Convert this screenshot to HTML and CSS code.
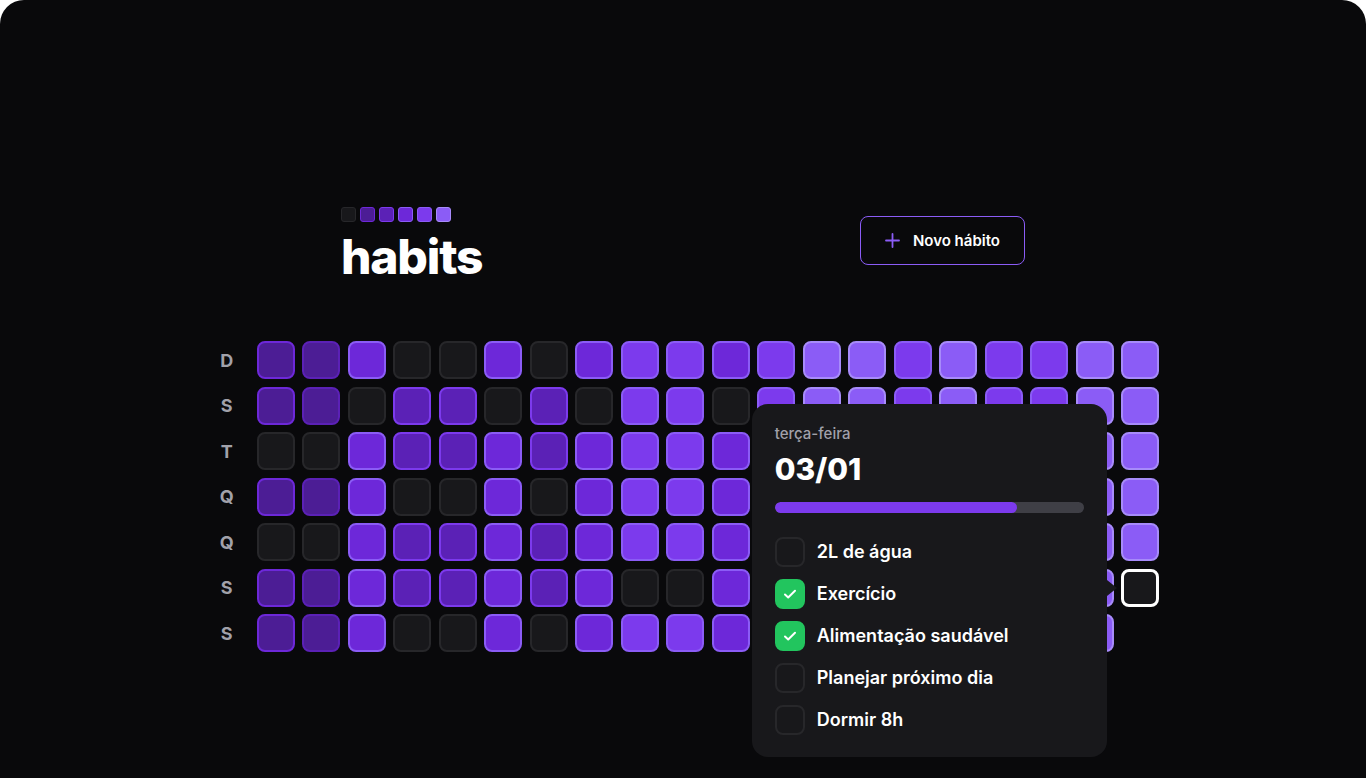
FILE: index.html
```html
<!DOCTYPE html>
<html lang="pt-BR">
<head>
<meta charset="utf-8">
<title>habits</title>
<link rel="stylesheet" href="styles.css">
</head>
<body>
<div class="window">
  <header class="header">
    <div class="brand">
      <div class="brand-squares">
        <span class="sq lv0"></span><span class="sq lv1"></span><span class="sq lv2"></span><span class="sq lv3"></span><span class="sq lv4"></span><span class="sq lv5"></span>
      </div>
      <h1 class="title">habits</h1>
    </div>
    <button class="new-btn" type="button">
      <svg class="plus" width="15" height="15" viewBox="0 0 15 15" fill="none" stroke="#8b5cf6" stroke-width="1.8" stroke-linecap="round"><path d="M7.5 1v13M1 7.5h13"/></svg>
      Novo hábito
    </button>
  </header>

  <section class="summary">
    <div class="weekdays">
      <span>D</span><span>S</span><span>T</span><span>Q</span><span>Q</span><span>S</span><span>S</span>
    </div>
    <div class="grid">
      <!-- col 1 -->
      <div class="cell lv1a"></div><div class="cell lv1a"></div><div class="cell lv0"></div><div class="cell lv1a"></div><div class="cell lv0"></div><div class="cell lv1a"></div><div class="cell lv1a"></div>
      <!-- col 2 -->
      <div class="cell lv1"></div><div class="cell lv1"></div><div class="cell lv0"></div><div class="cell lv1"></div><div class="cell lv0"></div><div class="cell lv1"></div><div class="cell lv1"></div>
      <!-- col 3 -->
      <div class="cell lv3"></div><div class="cell lv0"></div><div class="cell lv3"></div><div class="cell lv3"></div><div class="cell lv3"></div><div class="cell lv3"></div><div class="cell lv3"></div>
      <!-- col 4 -->
      <div class="cell lv0"></div><div class="cell lv2"></div><div class="cell lv2"></div><div class="cell lv0"></div><div class="cell lv2"></div><div class="cell lv2"></div><div class="cell lv0"></div>
      <!-- col 5 -->
      <div class="cell lv0"></div><div class="cell lv2"></div><div class="cell lv2"></div><div class="cell lv0"></div><div class="cell lv2"></div><div class="cell lv2"></div><div class="cell lv0"></div>
      <!-- col 6 -->
      <div class="cell lv3"></div><div class="cell lv0"></div><div class="cell lv3"></div><div class="cell lv3"></div><div class="cell lv3"></div><div class="cell lv3"></div><div class="cell lv3"></div>
      <!-- col 7 -->
      <div class="cell lv0"></div><div class="cell lv2"></div><div class="cell lv2"></div><div class="cell lv0"></div><div class="cell lv2"></div><div class="cell lv2"></div><div class="cell lv0"></div>
      <!-- col 8 -->
      <div class="cell lv3"></div><div class="cell lv0"></div><div class="cell lv3"></div><div class="cell lv3"></div><div class="cell lv3"></div><div class="cell lv3"></div><div class="cell lv3"></div>
      <!-- col 9 -->
      <div class="cell lv4"></div><div class="cell lv4"></div><div class="cell lv4"></div><div class="cell lv4"></div><div class="cell lv4"></div><div class="cell lv0"></div><div class="cell lv4"></div>
      <!-- col 10 -->
      <div class="cell lv4"></div><div class="cell lv4"></div><div class="cell lv4"></div><div class="cell lv4"></div><div class="cell lv4"></div><div class="cell lv0"></div><div class="cell lv4"></div>
      <!-- col 11 -->
      <div class="cell lv3"></div><div class="cell lv0"></div><div class="cell lv3"></div><div class="cell lv3"></div><div class="cell lv3"></div><div class="cell lv3"></div><div class="cell lv3"></div>
      <!-- col 12 -->
      <div class="cell lv4"></div><div class="cell lv4"></div><div class="cell lv4"></div><div class="cell lv4"></div><div class="cell lv4"></div><div class="cell lv4"></div><div class="cell lv4"></div>
      <!-- col 13 -->
      <div class="cell lv5"></div><div class="cell lv5"></div><div class="cell lv5"></div><div class="cell lv5"></div><div class="cell lv5"></div><div class="cell lv5"></div><div class="cell lv5"></div>
      <!-- col 14 -->
      <div class="cell lv5"></div><div class="cell lv5"></div><div class="cell lv5"></div><div class="cell lv5"></div><div class="cell lv5"></div><div class="cell lv5"></div><div class="cell lv5"></div>
      <!-- col 15 -->
      <div class="cell lv4"></div><div class="cell lv4"></div><div class="cell lv4"></div><div class="cell lv4"></div><div class="cell lv4"></div><div class="cell lv4"></div><div class="cell lv4"></div>
      <!-- col 16 -->
      <div class="cell lv5"></div><div class="cell lv5"></div><div class="cell lv5"></div><div class="cell lv5"></div><div class="cell lv5"></div><div class="cell lv5"></div><div class="cell lv5"></div>
      <!-- col 17 -->
      <div class="cell lv4"></div><div class="cell lv4"></div><div class="cell lv4"></div><div class="cell lv4"></div><div class="cell lv4"></div><div class="cell lv4"></div><div class="cell lv4"></div>
      <!-- col 18 -->
      <div class="cell lv4"></div><div class="cell lv4"></div><div class="cell lv4"></div><div class="cell lv4"></div><div class="cell lv4"></div><div class="cell lv4"></div><div class="cell lv4"></div>
      <!-- col 19 -->
      <div class="cell lv5"></div><div class="cell lv5"></div><div class="cell lv5"></div><div class="cell lv5"></div><div class="cell lv5"></div><div class="cell lv5"></div><div class="cell lv5"></div>
      <!-- col 20 -->
      <div class="cell lv5"></div><div class="cell lv5"></div><div class="cell lv5"></div><div class="cell lv5"></div><div class="cell lv5"></div>
      <div class="cell today">
        <div class="popover">
          <span class="pop-weekday">terça-feira</span>
          <span class="pop-date">03/01</span>
          <div class="progress"><div class="progress-fill" style="width: 78.3%"></div></div>
          <ul class="checklist">
            <li class="check-item"><span class="box"></span><span class="check-label">2L de água</span></li>
            <li class="check-item"><span class="box checked"><svg width="16" height="16" viewBox="0 0 16 16" fill="none" stroke="#fff" stroke-width="2" stroke-linecap="round" stroke-linejoin="round"><path d="M3 8.5l3.2 3L13 4.8"/></svg></span><span class="check-label">Exercício</span></li>
            <li class="check-item"><span class="box checked"><svg width="16" height="16" viewBox="0 0 16 16" fill="none" stroke="#fff" stroke-width="2" stroke-linecap="round" stroke-linejoin="round"><path d="M3 8.5l3.2 3L13 4.8"/></svg></span><span class="check-label">Alimentação saudável</span></li>
            <li class="check-item"><span class="box"></span><span class="check-label">Planejar próximo dia</span></li>
            <li class="check-item"><span class="box"></span><span class="check-label">Dormir 8h</span></li>
          </ul>
        </div>
      </div>
    </div>
  </section>
</div>
</body>
</html>
```

FILE: styles.css
```css
* {
  box-sizing: border-box;
  margin: 0;
  padding: 0;
}

body {
  margin: 0;
  background: #ffffff;
  font-family: Inter, "Noto Sans", sans-serif;
}

.window {
  height: 778px;
  background: #09090b;
  border-radius: 24px 24px 0 0;
  overflow: hidden;
  padding-top: 207px;
}

.header {
  width: 684px;
  margin: 0 auto;
  display: flex;
  justify-content: space-between;
  align-items: center;
}

.brand {
  display: flex;
  flex-direction: column;
  gap: 11px;
}

.brand-squares {
  display: flex;
  gap: 4px;
}

.sq {
  width: 15px;
  height: 15px;
  border-radius: 3px;
  border: 1px solid;
}

.title {
  font-size: 48px;
  font-weight: 800;
  line-height: 48px;
  color: #ffffff;
  letter-spacing: -1.2px;
}

.new-btn {
  display: flex;
  align-items: center;
  gap: 13px;
  height: 49px;
  padding: 0 24px;
  margin-top: -8px;
  border: 1px solid #8b5cf6;
  border-radius: 8px;
  background: transparent;
  color: #ffffff;
  font-family: Inter, "Noto Sans", sans-serif;
  font-size: 15px;
  font-weight: 600;
}

.summary {
  display: flex;
  justify-content: center;
  gap: 10px;
  margin-top: 60px;
}

.weekdays {
  display: grid;
  grid-template-rows: repeat(7, 38px);
  gap: 7.5px;
  width: 40px;
}

.weekdays span {
  display: flex;
  align-items: center;
  justify-content: center;
  color: #a1a1aa;
  font-size: 18px;
  font-weight: 700;
}

.grid {
  display: grid;
  grid-template-rows: repeat(7, 38px);
  grid-auto-flow: column;
  grid-auto-columns: 38px;
  gap: 7.5px;
}

.cell {
  border: 2px solid;
  border-radius: 8px;
}

.lv0 { background: #18181b; border-color: #27272a; }
.lv1a { background: #4c1d95; border-color: #6d28d9; }
.lv1 { background: #4c1d95; border-color: #5b21b6; }
.lv2 { background: #5b21b6; border-color: #7c3aed; }
.lv3 { background: #6d28d9; border-color: #8b5cf6; }
.lv4 { background: #7c3aed; border-color: #8b5cf6; }
.lv5 { background: #8b5cf6; border-color: #a78bfa; }

.sq.lv1 { border-color: #6d28d9; }
.sq.lv2 { border-color: #7c3aed; }

.today {
  position: relative;
  background: #18181b;
  border: 3px solid #ffffff;
}

.popover {
  position: absolute;
  right: calc(100% + 17.5px);
  top: -168px;
  width: 355px;
  padding: 22px 23px 22px;
  background: #18181b;
  border-radius: 16px;
  z-index: 10;
  display: flex;
  flex-direction: column;
}

.popover::after {
  content: "";
  position: absolute;
  left: 100%;
  top: 176px;
  border-left: 10px solid #18181b;
  border-top: 8px solid transparent;
  border-bottom: 8px solid transparent;
}

.pop-weekday {
  font-size: 15px;
  font-weight: 500;
  line-height: 15px;
  color: #a1a1aa;
}

.pop-date {
  margin-top: 13px;
  font-size: 30px;
  font-weight: 800;
  line-height: 30px;
  color: #ffffff;
}

.progress {
  margin-top: 18px;
  height: 11px;
  border-radius: 999px;
  background: #3f3f46;
  overflow: hidden;
}

.progress-fill {
  height: 100%;
  border-radius: 999px;
  background: #7c3aed;
}

.checklist {
  list-style: none;
  margin-top: 24px;
  display: flex;
  flex-direction: column;
  gap: 12px;
}

.check-item {
  display: flex;
  align-items: center;
  gap: 12px;
}

.box {
  width: 30px;
  height: 30px;
  border-radius: 8px;
  border: 2px solid #27272a;
  background: #18181b;
  display: flex;
  align-items: center;
  justify-content: center;
  flex-shrink: 0;
}

.box.checked {
  background: #22c55e;
  border-color: #22c55e;
}

.check-label {
  font-size: 18px;
  font-weight: 600;
  color: #ffffff;
  line-height: 24px;
}
```
